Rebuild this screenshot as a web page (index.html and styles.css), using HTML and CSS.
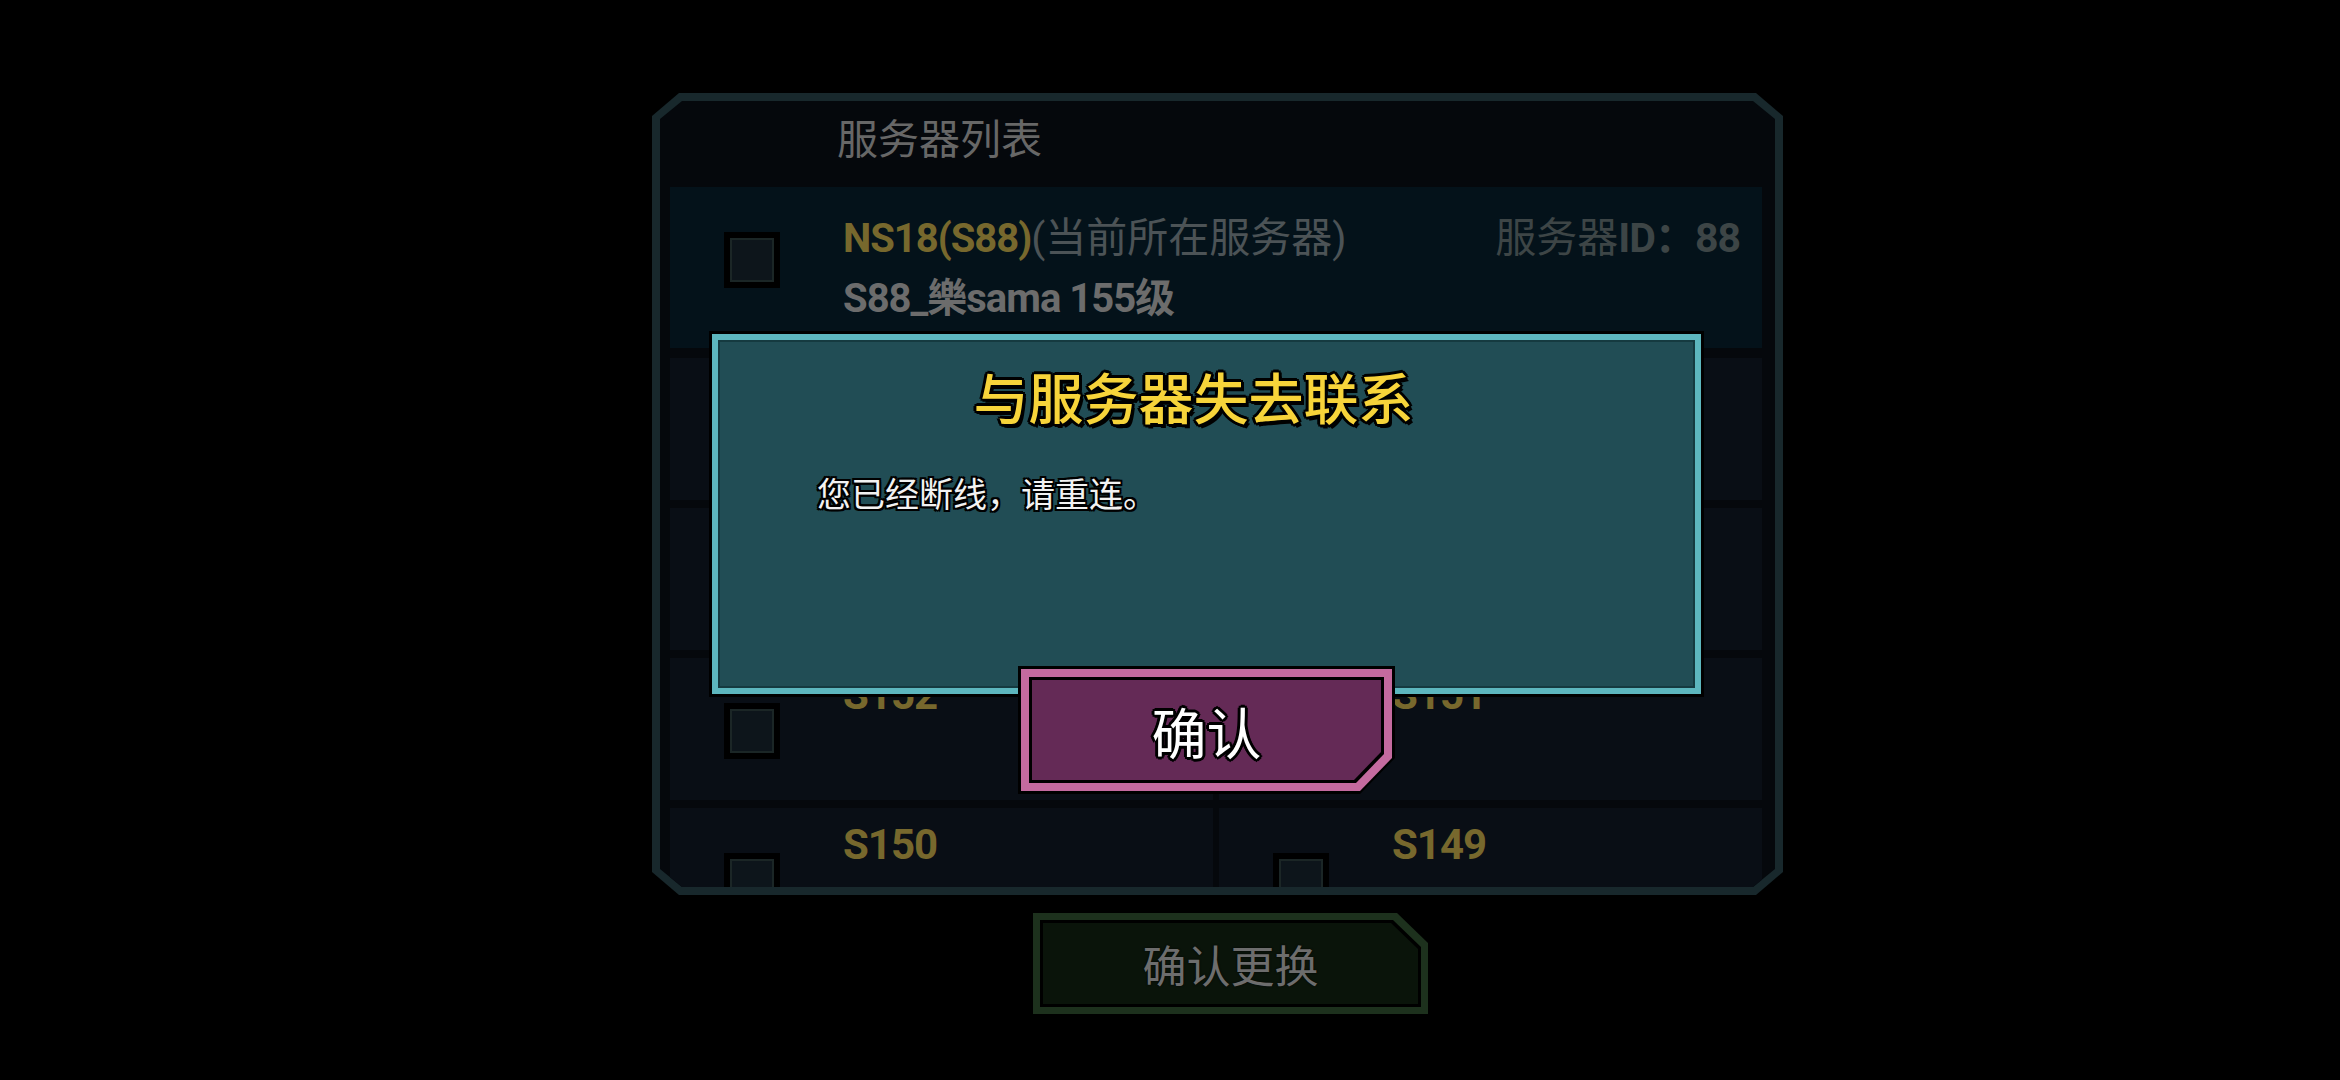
FILE: index.html
```html
<!DOCTYPE html>
<html lang="zh-CN">
<head>
    <meta charset="UTF-8">
    <title>服务器列表</title>
    <link rel="stylesheet" href="styles.css">
</head>
<body>
    <div class="screen">
        <section class="panel">
            <div class="panel-inner">
                <h2 class="panel-title">服务器列表</h2>

                <div class="server-list">
                    <div class="server current">
                        <span class="check"></span>
                        <div class="server-info">
                            <div class="line"><span class="gold">NS18(S88)</span><span class="note">(当前所在服务器)</span></div>
                            <div class="line role">S88_樂sama 155级</div>
                        </div>
                        <div class="server-id">服务器<b>ID：88</b></div>
                    </div>

                    <div class="server-grid">
                        <div class="server"><span class="check"></span><div class="server-info"><span class="gold">S156</span></div></div>
                        <div class="server"><span class="check"></span><div class="server-info"><span class="gold">S155</span></div></div>
                        <div class="server"><span class="check"></span><div class="server-info"><span class="gold">S154</span></div></div>
                        <div class="server"><span class="check"></span><div class="server-info"><span class="gold">S153</span></div></div>
                        <div class="server"><span class="check"></span><div class="server-info"><span class="gold">S152</span></div></div>
                        <div class="server"><span class="check"></span><div class="server-info"><span class="gold">S151</span></div></div>
                        <div class="server"><span class="check"></span><div class="server-info"><span class="gold">S150</span></div></div>
                        <div class="server"><span class="check"></span><div class="server-info"><span class="gold">S149</span></div></div>
                    </div>
                </div>
            </div>
        </section>

        <button class="swap-btn"><span class="swap-face"><span class="swap-fill">确认更换</span></span></button>

        <!-- disconnect dialog on top of the list -->
        <div class="modal">
            <div class="modal-box">
                <h3 class="modal-title">与服务器失去联系</h3>
                <p class="modal-text">您已经断线，请重连。</p>
            </div>
            <button class="ok-btn"><span class="ok-ring"><span class="ok-face"><span class="ok-fill">确认</span></span></span></button>
        </div>
    </div>
</body>
</html>
```

FILE: styles.css
```css
body {
    margin: 0;
    background: #000;
    font-family: Roboto, "Noto Sans CJK SC", sans-serif;
}

.screen {
    position: relative;
    width: 2340px;
    height: 1080px;
    overflow: hidden;
    box-sizing: border-box;
    padding: 93px 0 0 652px;
    display: flex;
    flex-direction: column;
    align-items: flex-start;
}

/* list panel */
.panel {
    width: 1131px;
    height: 802px;
    padding: 8px;
    box-sizing: border-box;
    background: #18282c;
    clip-path: polygon(27px 0, calc(100% - 27px) 0, 100% 23px, 100% calc(100% - 23px), calc(100% - 27px) 100%, 27px 100%, 0 calc(100% - 23px), 0 23px);
}

.panel-inner {
    height: 100%;
    background: #05080c;
    display: flex;
    flex-direction: column;
    overflow: hidden;
    clip-path: polygon(22px 0, calc(100% - 22px) 0, 100% 18px, 100% calc(100% - 18px), calc(100% - 22px) 100%, 22px 100%, 0 calc(100% - 18px), 0 18px);
}

.panel-title {
    margin: 0;
    flex: none;
    height: 86px;
    padding-left: 177px;
    font-size: 41px;
    font-weight: 400;
    line-height: 78px;
    color: #676767;
}

.server-list {
    padding: 0 13px 0 10px;
}

.server {
    display: flex;
    align-items: flex-start;
    padding-left: 54px;
    height: 142px;
    box-sizing: border-box;
    background: #090e15;
}

.server.current {
    height: 161px;
    margin-bottom: 10px;
    background: #04121a;
}

.server-grid {
    display: grid;
    grid-template-columns: 1fr 1fr;
    column-gap: 6px;
    row-gap: 8px;
}

.check {
    flex: none;
    width: 56px;
    height: 56px;
    margin-top: 45px;
    box-sizing: border-box;
    border: 6px solid #000;
    background: #0d151b;
    box-shadow: inset 0 0 0 2px #1b2626;
}

.server-info {
    margin-left: 63px;
    padding-top: 12px;
    font-size: 42px;
    line-height: 50px;
    font-weight: 700;
    letter-spacing: -1px;
}

.current .server-info {
    padding-top: 21px;
    font-size: 40px;
    line-height: 60px;
}

.gold {
    color: #77682d;
}

.note {
    font-size: 41px;
    font-weight: 400;
    color: #4c5356;
    letter-spacing: 0;
}

.role {
    color: #6c6c6c;
}

.server-id {
    margin-left: auto;
    padding: 21px 22px 0 0;
    font-size: 41px;
    line-height: 60px;
    color: #3d4546;
}

.server-id b {
    letter-spacing: -1px;
}

/* bottom button */
.swap-btn {
    margin: 18px 0 0 381px;
    width: 395px;
    height: 101px;
    padding: 7px;
    border: none;
    background: #1d311d;
    font-family: inherit;
    clip-path: polygon(0 0, calc(100% - 31px) 0, 100% 30px, 100% 100%, 0 100%);
}

.swap-face {
    display: block;
    height: 100%;
    padding: 3px;
    box-sizing: border-box;
    background: #000;
    clip-path: polygon(0 0, calc(100% - 28px) 0, 100% 27px, 100% 100%, 0 100%);
}

.swap-fill {
    display: flex;
    align-items: center;
    justify-content: center;
    height: 100%;
    background: #0a140a;
    color: #6d6d6d;
    font-size: 44px;
    clip-path: polygon(0 0, calc(100% - 27px) 0, 100% 26px, 100% 100%, 0 100%);
    text-shadow: 0 0 2px #000;
}

/* dialog */
.modal {
    position: absolute;
    left: 709px;
    top: 331px;
    width: 995px;
    display: flex;
    flex-direction: column;
    align-items: center;
}

.modal-box {
    width: 100%;
    height: 366px;
    box-sizing: border-box;
    border: 3px solid #000;
    background: #214d55;
    box-shadow: inset 0 0 0 6px #5db6be, inset 0 0 0 8px #153a40;
}

.modal-title {
    margin: 0;
    padding: 34px 26px 0 0;
    text-align: center;
    font-size: 55px;
    line-height: 64px;
    font-weight: 500;
    color: #f7d43a;
    text-shadow: -2px -2px 0 #000, 2px -2px 0 #000, -2px 2px 0 #000, 2px 2px 0 #000,
                 0 -3px 0 #000, 0 3px 0 #000, -3px 0 0 #000, 3px 0 0 #000, 3px 4px 0 #000;
}

.modal-text {
    margin: 41px 0 0;
    padding-left: 105px;
    font-size: 34px;
    line-height: 44px;
    color: #f2f2f2;
    text-shadow: -2px -2px 0 #000, 2px -2px 0 #000, -2px 2px 0 #000, 2px 2px 0 #000,
                 0 -2px 0 #000, 0 2px 0 #000, -2px 0 0 #000, 2px 0 0 #000;
}

.ok-btn {
    margin-top: -31px;
    width: 377px;
    height: 128px;
    padding: 3px;
    border: none;
    background: #000;
    font-family: inherit;
    clip-path: polygon(0 0, 100% 0, 100% calc(100% - 36px), calc(100% - 35px) 100%, 0 100%);
}

.ok-ring {
    display: block;
    height: 100%;
    padding: 8px;
    box-sizing: border-box;
    background: #c46a9f;
    clip-path: polygon(0 0, 100% 0, 100% calc(100% - 33px), calc(100% - 32px) 100%, 0 100%);
}

.ok-face {
    display: block;
    height: 100%;
    padding: 3px;
    box-sizing: border-box;
    background: #000;
    clip-path: polygon(0 0, 100% 0, 100% calc(100% - 29px), calc(100% - 28px) 100%, 0 100%);
}

.ok-fill {
    display: flex;
    align-items: center;
    justify-content: center;
    height: 100%;
    background: #642a56;
    color: #fff;
    font-size: 55px;
    clip-path: polygon(0 0, 100% 0, 100% calc(100% - 28px), calc(100% - 27px) 100%, 0 100%);
    text-shadow: -2px -2px 0 #000, 2px -2px 0 #000, -2px 2px 0 #000, 2px 2px 0 #000,
                 0 -3px 0 #000, 0 3px 0 #000, -3px 0 0 #000, 3px 0 0 #000;
}
```
